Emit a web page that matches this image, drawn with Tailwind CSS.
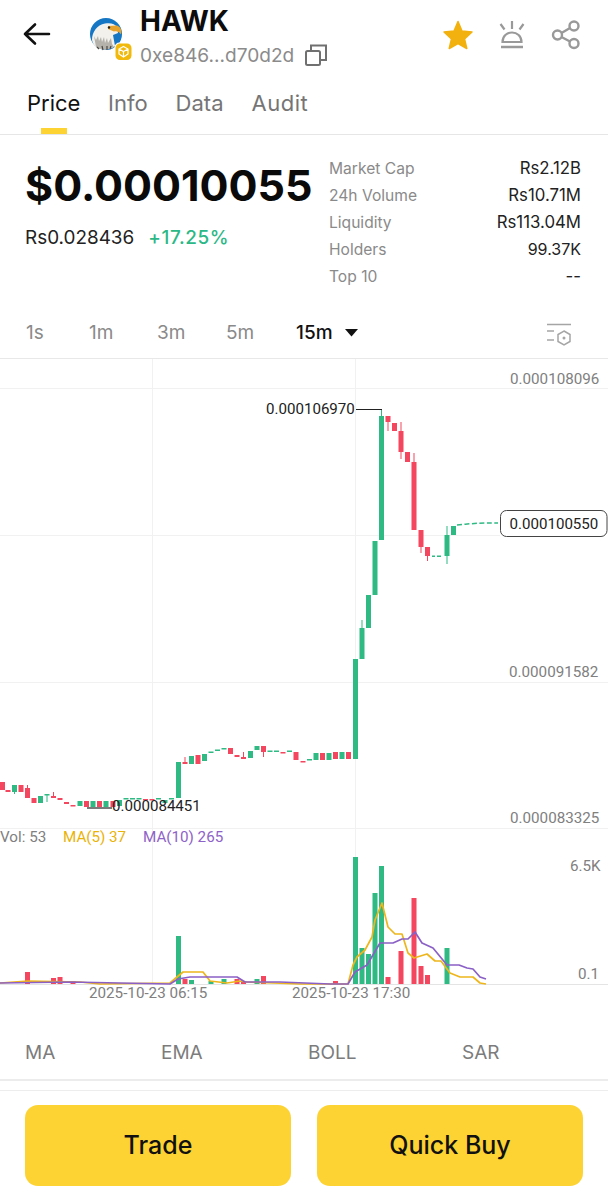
<!DOCTYPE html>
<html>
<head>
<meta charset="utf-8">
<script src="https://cdn.jsdelivr.net/npm/@tailwindcss/browser@4"></script>
</head>
<body class="bg-white">
<div class="w-[608px] h-[1200px] overflow-hidden flex flex-col font-['Inter','Noto_Sans',sans-serif] text-[#111]">

  <!-- header -->
  <div class="h-[78px] relative flex items-start shrink-0">
    <svg class="absolute left-[23px] top-[22px]" width="28" height="24" viewBox="0 0 28 24" fill="none" stroke="#111" stroke-width="2.6" stroke-linecap="round" stroke-linejoin="round"><path d="M2 12H26M12 2.5L2 12L12 21.5"/></svg>
    <svg class="absolute left-[88px] top-[16px]" width="46" height="46" viewBox="0 0 46 46">
      <circle cx="18" cy="18" r="16" fill="#1576c4"/>
      <path d="M4 24C4 16 9 9 17 7.500C23 6.500 27 8 29 11L30 17L25 19L27 30C23 34 13 35 8 31C6 29 4.500 27 4 24Z" fill="#f3f1ec"/>
      <path d="M6 20L8 24L10 20L11 25L13 21L14 26L16 21L17 27L19 22L20 27L23 22L24 28L26 31C21 34 13 34.500 8 31Z" fill="#b5b2ac"/>
      <path d="M9 31L11 33M14 30L15 34M19 30L19 34M23 30L22 33" stroke="#4a4743" stroke-width="1.200"/>
      <path d="M20 10L29 9.500C33 11 34 14.500 33 18.500C31 15.500 29 15 26 15.500L20 13Z" fill="#e8a32c"/>
      <circle cx="21" cy="11.500" r="1.200" fill="#222"/>
      <rect x="26.500" y="26.500" width="18" height="18" rx="5" fill="#fff"/>
      <rect x="27.500" y="27.500" width="16" height="16.500" rx="4.500" fill="#f0b90b"/>
      <path d="M35.500 30.500L40 33V38L35.500 41L31 38V33ZM31 33L35.500 35.500L40 33M35.500 35.500V41" fill="none" stroke="#fff" stroke-width="1.200"/>
    </svg>
    <div class="absolute left-[140px] top-[2px] text-[28px] leading-[38px] font-bold text-[#0c0c0c]">HAWK</div>
    <div class="absolute left-[140px] top-[43px] text-[19.100px] leading-[24px] text-[#8b8b8b]">0xe846...d70d2d</div>
    <svg class="absolute left-[304px] top-[43px]" width="24" height="24" viewBox="0 0 24 24" fill="none" stroke="#707070" stroke-width="2"><rect x="2" y="8" width="14" height="14" rx="1.500"/><path d="M7 8V2.500H22V17H16"/></svg>
    <svg class="absolute left-[442px] top-[20px]" width="32" height="30" viewBox="0 0 32 30"><path d="M16 1.500L20 11L30 12L22.500 19L24.800 28.500L16 23.500L7.200 28.500L9.500 19L2 12L12 11Z" fill="#f2b10e" stroke="#f2b10e" stroke-width="1.500" stroke-linejoin="round"/></svg>
    <svg class="absolute left-[498px] top-[19px]" width="28" height="30" viewBox="0 0 28 30" fill="none" stroke="#999" stroke-width="2.200"><path d="M14 2V10M2.500 5L6.500 10.500M25.500 5L21.500 10.500"/><path d="M4.500 23C4.500 17 9 13.500 14 13.500C19 13.500 23.500 17 23.500 23Z"/><path d="M3 28H25" stroke-width="2.500"/></svg>
    <svg class="absolute left-[551px] top-[20px]" width="30" height="30" viewBox="0 0 30 30" fill="none" stroke="#999" stroke-width="2.400"><circle cx="6.500" cy="15" r="4.500"/><circle cx="23" cy="6" r="4.500"/><circle cx="23" cy="23.500" r="4.500"/><path d="M10.500 13L19 8M10.500 17L19 21.500"/></svg>
  </div>

  <!-- tabs -->
  <div class="h-[57px] shrink-0 border-b border-[#e6e6e6] flex gap-[28px] pl-[27px] text-[22px] leading-[50px] text-[#757575]">
    <div class="relative text-[#111] h-[56px] w-[53px]">Price<div class="absolute left-[14px] top-[50px] w-[26px] h-[6px] bg-[#fdd334]"></div></div>
    <div>Info</div><div>Data</div><div class="tracking-[0.5px]">Audit</div>
  </div>

  <!-- stats -->
  <div class="h-[167px] shrink-0 relative">
    <div class="absolute left-[25px] top-[23px] text-[43px] leading-[54px] font-bold text-[#0a0a0a]">$0.00010055</div>
    <div class="absolute left-[25px] top-[90px] text-[18.900px] leading-[26px] flex gap-[14px]"><span class="text-[#222]">Rs0.028436</span><span class="text-[#2bb886] font-medium tracking-[0.6px]">+17.25%</span></div>
    <div class="absolute left-[329px] right-[27px] top-[20px] flex flex-col text-[15.600px] leading-[27px]">
      <div class="flex justify-between"><span class="text-[#8a8a8a]">Market Cap</span><span class="text-[#222] text-[16.800px]">Rs2.12B</span></div>
      <div class="flex justify-between"><span class="text-[#8a8a8a]">24h Volume</span><span class="text-[#222] text-[16.800px]">Rs10.71M</span></div>
      <div class="flex justify-between"><span class="text-[#8a8a8a]">Liquidity</span><span class="text-[#222] text-[16.800px]">Rs113.04M</span></div>
      <div class="flex justify-between"><span class="text-[#8a8a8a]">Holders</span><span class="text-[#222] text-[16px]">99.37K</span></div>
      <div class="flex justify-between"><span class="text-[#8a8a8a]">Top 10</span><span class="text-[#222] text-[16.800px]">--</span></div>
    </div>
  </div>

  <!-- timeframes -->
  <div class="h-[57px] shrink-0 relative border-b border-[#e8e8e8] text-[19px] leading-[62px] text-[#8a8a8a]">
    <div class="flex pl-[26px]">
      <span class="w-[63px]">1s</span><span class="w-[68px]">1m</span><span class="w-[69px]">3m</span><span class="w-[70px]">5m</span>
      <span class="text-[#111] font-medium">15m</span>
      <svg class="ml-[12px] mt-[27px]" width="13" height="8" viewBox="0 0 13 8"><path d="M0 0H13L6.500 7.500Z" fill="#111"/></svg>
    </div>
    <svg class="absolute left-[546px] top-[21px]" width="26" height="26" viewBox="0 0 26 26" fill="none" stroke="#a5a5a5" stroke-width="1.500"><path d="M1 1.500H25M1 8H8M1 17H8"/><path d="M18 8L24 11.500V18.500L18 22L12 18.500V11.500Z"/><circle cx="18" cy="15" r="1.500" fill="#a5a5a5" stroke="none"/></svg>
  </div>

  <!-- chart: free canvas, coordinates are page y -->
  <div class="h-[666px] shrink-0 relative">
    <svg class="absolute left-0 top-0 font-['Roboto',sans-serif]" width="608" height="666" viewBox="0 359 608 666">
      <g stroke="#f1f1f1" stroke-width="1">
        <path d="M0 388.500H608M0 535.500H500M0 682.500H608M0 828.500H608M152.500 359V985M355.500 359V985"/>
      </g>
      <path d="M0 984.500H608" stroke="#e4e4e4"/>

      <!-- green candles -->
      <g fill="#2fb983">
        <rect x="379" y="416" width="5" height="124"/><rect x="381" y="409" width="1" height="8"/>
        <rect x="372.500" y="541" width="5" height="54"/>
        <rect x="366" y="595" width="5" height="33"/>
        <rect x="359.500" y="628" width="5" height="31"/><rect x="361.500" y="620" width="1" height="8"/>
        <rect x="353" y="659" width="5" height="100"/>
        <rect x="444.500" y="535" width="5" height="21"/><rect x="446.500" y="526" width="1" height="38"/>
        <rect x="451" y="526" width="5" height="9"/>
        <rect x="176" y="762" width="5" height="36"/>
        <rect x="189" y="756" width="5" height="8"/>
        <rect x="202" y="754" width="5" height="7"/>
        <rect x="208.500" y="751.500" width="5" height="1.500"/>
        <rect x="215" y="749.500" width="5" height="1.500"/>
        <rect x="221.500" y="748" width="5" height="1.500"/>
        <rect x="248" y="751" width="5" height="7"/>
        <rect x="254.500" y="746" width="5" height="4"/>
        <rect x="267.500" y="750.500" width="5" height="1.500"/>
        <rect x="274" y="750.500" width="5" height="1.500"/>
        <rect x="287" y="750.500" width="5" height="1.500"/>
        <rect x="307" y="759" width="5" height="1.500"/>
        <rect x="313.500" y="753" width="5" height="7"/>
        <rect x="326.500" y="753" width="5" height="7"/>
        <rect x="339.500" y="752" width="5" height="7"/>
        <rect x="12" y="785" width="5" height="7"/><rect x="14" y="792" width="1" height="2"/>
        <rect x="38" y="796" width="5" height="7"/>
        <rect x="44.500" y="794" width="5" height="1.500"/><rect x="46.500" y="794" width="1" height="8"/>
        <rect x="77.500" y="801" width="5" height="5"/>
        <rect x="90.500" y="801" width="5" height="6"/>
        <rect x="103.500" y="801" width="5" height="6"/>
        <rect x="117" y="800" width="5" height="6"/>
        <rect x="123.500" y="798" width="5" height="1.500"/>
        <rect x="130" y="798" width="5" height="1.500"/>
        <rect x="136.500" y="798" width="5" height="1.500"/>
        <rect x="156" y="798" width="5" height="1.500"/>
        <rect x="162.500" y="800" width="5" height="3"/>
        <rect x="169" y="798" width="5" height="1.500"/>
      </g>
      <!-- red candles -->
      <g fill="#f4465e">
        <rect x="385.500" y="416" width="5" height="6"/><rect x="387.500" y="422" width="1" height="9"/>
        <rect x="392" y="423" width="5" height="8"/>
        <rect x="398.500" y="431" width="5" height="21"/><rect x="400.500" y="422" width="1" height="37"/>
        <rect x="405" y="452" width="5" height="10"/>
        <rect x="411.500" y="462" width="5" height="68"/><rect x="413.500" y="453" width="1" height="9"/>
        <rect x="418.500" y="530" width="5" height="17"/><rect x="420.500" y="547" width="1" height="6"/>
        <rect x="425" y="547" width="5" height="9"/><rect x="427" y="556" width="1" height="5"/>
        <rect x="182.500" y="762" width="5" height="2"/><rect x="184.500" y="757" width="1" height="6"/>
        <rect x="195.500" y="755" width="5" height="9"/>
        <rect x="228" y="748" width="5" height="6"/>
        <rect x="234.500" y="755" width="5" height="2"/>
        <rect x="241" y="757" width="5" height="2"/><rect x="243" y="752" width="1" height="6"/>
        <rect x="261" y="746" width="5" height="6"/><rect x="263" y="752" width="1" height="5"/>
        <rect x="280.500" y="752" width="5" height="1.500"/>
        <rect x="293.500" y="752" width="5" height="8"/>
        <rect x="300.500" y="761" width="5" height="1.500"/>
        <rect x="320" y="753" width="5" height="7"/>
        <rect x="333" y="752" width="5" height="7"/>
        <rect x="346" y="752" width="5" height="7"/>
        <rect x="0" y="782" width="5" height="8"/>
        <rect x="5.500" y="790" width="5" height="2"/>
        <rect x="18.500" y="785" width="5" height="7"/>
        <rect x="25" y="788" width="5" height="10"/><rect x="27" y="785" width="1" height="4"/>
        <rect x="31.500" y="798" width="5" height="5"/>
        <rect x="51" y="796" width="5" height="2"/><rect x="53" y="792" width="1" height="5"/>
        <rect x="57.500" y="798" width="5" height="2"/>
        <rect x="64" y="802" width="5" height="2"/>
        <rect x="70.500" y="805" width="5" height="1.500"/>
        <rect x="84" y="801" width="5" height="6"/>
        <rect x="97" y="801" width="5" height="6"/>
        <rect x="110.500" y="801" width="5" height="6"/>
        <rect x="143" y="799" width="5" height="1.500"/>
        <rect x="149.500" y="799" width="5" height="1.500"/>
      </g>
      <g fill="#2fb983">
        <rect x="432" y="555.500" width="3" height="1.500"/><rect x="437" y="555.500" width="4" height="1.500"/>
      </g>
      <path d="M457 525C470 523.500 482 522.800 498 523" fill="none" stroke="#2fb983" stroke-width="1.500" stroke-dasharray="5 2.500"/>

      <!-- high / low markers -->
      <path d="M356 409.500H382" stroke="#222" stroke-width="1"/>
      <path d="M87 808H112" stroke="#222" stroke-width="1.200"/>
      <text x="266" y="413.500" font-size="15.100" fill="#222">0.000106970</text>
      <text x="112" y="811" font-size="15.100" fill="#222">0.000084451</text>

      <!-- axis labels -->
      <g font-size="15.200" fill="#808080">
        <text x="510" y="384">0.000108096</text>
        <text x="509" y="677">0.000091582</text>
        <text x="510" y="823">0.000083325</text>
        <text x="570" y="871">6.5K</text>
        <text x="578" y="979">0.1</text>
        <text x="89" y="998">2025-10-23 06:15</text>
        <text x="292" y="998">2025-10-23 17:30</text>
      </g>

      <!-- last price tag -->
      <rect x="500.500" y="510.500" width="106.500" height="26" rx="6" fill="#fff" stroke="#444" stroke-width="1"/>
      <text x="509.500" y="528.500" font-size="15.100" fill="#222">0.000100550</text>

      <!-- volume legend -->
      <g font-size="15.200">
        <text x="0" y="842" fill="#808080">Vol: 53</text>
        <text x="63" y="842" fill="#eab308">MA(5) 37</text>
        <text x="143" y="842" fill="#8e62c8">MA(10) 265</text>
      </g>

      <!-- volume bars -->
      <g fill="#2fb983">
        <rect x="176" y="936" width="5" height="48"/>
        <rect x="189" y="980" width="5" height="4"/>
        <rect x="208.500" y="981" width="5" height="3"/>
        <rect x="221.500" y="979" width="5" height="5"/>
        <rect x="254.500" y="979" width="5" height="5"/>
        <rect x="353" y="857" width="5" height="127"/>
        <rect x="359.500" y="948" width="5" height="36"/>
        <rect x="366" y="954" width="5" height="30"/>
        <rect x="372.500" y="893" width="5" height="91"/>
        <rect x="379" y="866" width="5" height="118"/>
        <rect x="444.500" y="948" width="5" height="36"/>
      </g>
      <g fill="#f4465e">
        <rect x="25" y="972" width="5" height="12"/>
        <rect x="51" y="978" width="5" height="6"/>
        <rect x="57.500" y="977" width="5" height="7"/>
        <rect x="70.500" y="981" width="5" height="3"/>
        <rect x="182.500" y="979" width="5" height="5"/>
        <rect x="234.500" y="979" width="5" height="5"/>
        <rect x="241" y="982" width="5" height="2"/>
        <rect x="261" y="976" width="5" height="8"/>
        <rect x="333" y="981" width="5" height="3"/>
        <rect x="385.500" y="977" width="5" height="7"/>
        <rect x="398.500" y="951" width="5" height="33"/>
        <rect x="411.500" y="898" width="5" height="86"/>
        <rect x="418.500" y="966" width="5" height="18"/>
        <rect x="425" y="975" width="5" height="9"/>
      </g>
      <!-- MA lines -->
      <polyline fill="none" stroke="#eeb61c" stroke-width="1.700" stroke-linejoin="round" points="0,983 28,981 80,982 100,984 170,983 177,977 183,972 203,972 210,981 227,983 240,981 247,982 300,984 340,984 348,984 353,965 357,957 365,950 372,937 375,920 382,903 388,927 395,934 402,934 408,953 414,958 427,954 435,961 441,961 450,973 460,977 473,977 480,983 486,984"/>
      <polyline fill="none" stroke="#8a60c6" stroke-width="1.700" stroke-linejoin="round" points="0,983 70,982 170,984 178,979 190,977 237,977 245,982 280,982 330,984 348,984 355,972 367,965 380,943 393,943 402,939 408,939 415,932 422,943 433,948 447,965 459,965 467,968 473,969 480,977 486,979"/>
    </svg>
  </div>

  <!-- indicators -->
  <div class="h-[56px] shrink-0 relative border-b-2 border-[#ececec] text-[19px] leading-[55px] text-[#7c7c7c]">
    <div class="flex pl-[25px]">
      <span class="w-[136px]">MA</span><span class="w-[147px]">EMA</span><span class="w-[154px]">BOLL</span><span>SAR</span>
    </div>
  </div>

  <!-- actions -->
  <div class="mt-[9px] flex-1 border-t border-[#ededed] flex gap-[26px] px-[25px] pt-[14px]">
    <div class="w-[266px] h-[81px] rounded-[13px] bg-[#fdd334] flex items-center justify-center text-[25px] font-medium text-[#111]">Trade</div>
    <div class="w-[266px] h-[81px] rounded-[13px] bg-[#fdd334] flex items-center justify-center text-[25px] font-medium text-[#111]">Quick Buy</div>
  </div>
</div>
</body>
</html>
